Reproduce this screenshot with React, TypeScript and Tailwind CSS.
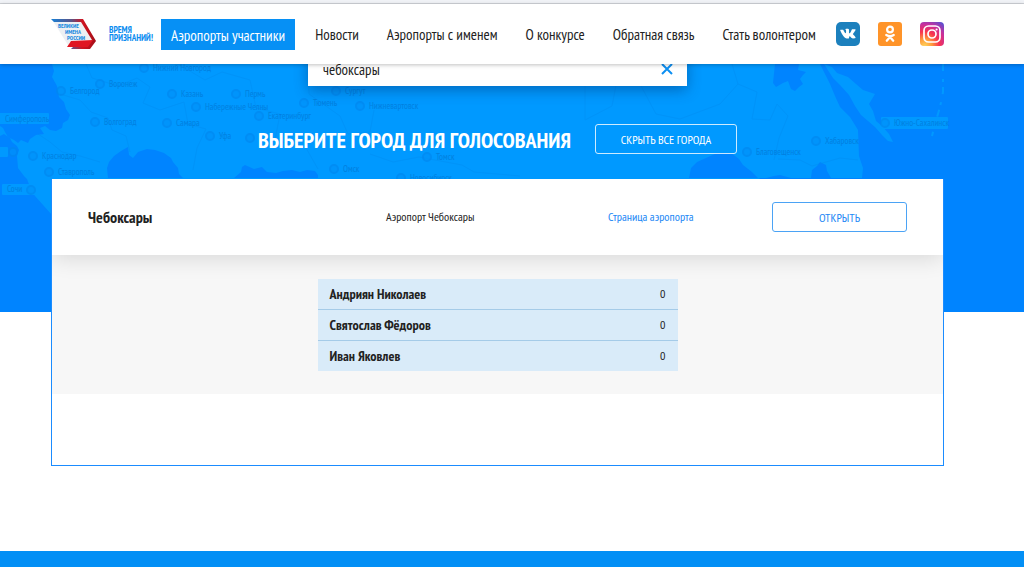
import { useState } from "react";

const navLinks = [
  "Новости",
  "Аэропорты с именем",
  "О конкурсе",
  "Обратная связь",
  "Стать волонтером",
];

const candidates = [
  { name: "Андриян Николаев", votes: 0 },
  { name: "Святослав Фёдоров", votes: 0 },
  { name: "Иван Яковлев", votes: 0 },
];

const cities = [
  { name: "Нижний Новгород", x: 144, y: 4 },
  { name: "Белгород", x: 61, y: 27 },
  { name: "Воронеж", x: 100, y: 20 },
  { name: "Казань", x: 172, y: 30 },
  { name: "Пермь", x: 236, y: 30 },
  { name: "Набережные Челны", x: 196, y: 43 },
  { name: "Волгоград", x: 95, y: 58 },
  { name: "Самара", x: 167, y: 59 },
  { name: "Уфа", x: 210, y: 72 },
  { name: "Краснодар", x: 33, y: 92 },
  { name: "Ставрополь", x: 49, y: 108 },
  { name: "Сургут", x: 336, y: 27 },
  { name: "Тюмень", x: 304, y: 39 },
  { name: "Нижневартовск", x: 360, y: 42 },
  { name: "Екатеринбург", x: 259, y: 52 },
  { name: "Томск", x: 427, y: 93 },
  { name: "Омск", x: 334, y: 105 },
  { name: "Новосибирск", x: 401, y: 114 },
  { name: "Благовещенск", x: 747, y: 88 },
  { name: "Хабаровск", x: 816, y: 77 },
];

function MapBackground() {
  return (
    <svg
      className="absolute top-0 left-0"
      width="1024"
      height="248"
      viewBox="0 0 1024 248"
      aria-hidden="true"
    >
      <path
        fill="#0099ff"
        d="M52 0 L54 7 52 13 57 22 59 33 64 38 66 45 70 51 68 56 63 59 62 64 56 67 50 66 45 62 40 64 44 70 36 71 30 75 28 79 21 76 18 79 14 76 8 73 5 68 3 64 0 62 0 72 4 70 10 74 12 78 17 82 19 86 17 92 18 104 24 112 27 115 30 123 35 132 60 160 420 200 700 180 760 114 870 114 862 114 863 104 859 92 858 66 850 53 840 43 835 32 830 20 826 12 820 0Z"
      />
      {/* Sakhalin and the Kurils */}
      <path
        fill="#0099ff"
        d="M824 0 L832 3 837 9 848 13 856 20 863 26 875 30 869 40 873 47 876 57 882 62 889 70 893 78 888 77 882 71 875 63 868 57 861 51 855 42 849 31 840 21 833 14Z"
      />
      <path
        stroke="#0099ff"
        strokeWidth="2"
        strokeDasharray="7 8 3 5"
        fill="none"
        d="M943 0 L943 28 Q940 45 936 56 L932 72"
      />
      {/* seas and the territory to the south */}
      <g fill="#0084ff">
        <path d="M775 0 L773 19 776 23 783 19 788 17 791 25 795 27 799 23 803 20 800 15 803 11 806 8 798 6 799 0Z" />
        <path d="M108 114 L107 104 109 98 114 92 121 87 128 83 129 91 133 94 138 88 147 85 155 86 164 89 171 94 173 98 178 104 179 110 183 114Z" />
        <path d="M234 114 L241 108 242 103 245 101 254 105 262 103 267 108 276 109 283 107 292 106 300 108 307 106 315 107 318 111 318 114Z" />
        <path d="M689 114 L691 104 697 98 706 94 717 89 731 89 739 95 743 101 752 108 758 114Z" />
        <path d="M811 114 L812 106 817 102 820 98 826 101 827 107 831 114Z" />
        <path d="M766 114 L774 112 780 111 791 114Z" />
      </g>
      {/* region borders */}
      <g fill="none" stroke="#008df2" strokeWidth="1" opacity="0.45">
        <path d="M60 30 L80 36 91 48 108 54 112 66 126 72 130 88" />
        <path d="M86 0 L92 14 118 22 137 14 150 23 143 39 160 46 184 38 188 60 206 65 197 84 193 106" />
        <path d="M38 70 L50 78 62 88 80 92 100 98" />
        <path d="M178 0 L205 16 222 8 250 16 256 44 280 50 275 76 306 84 318 105" />
        <path d="M308 0 L309 30 340 52 348 70 370 68 374 46" />
        <path d="M585 22 L585 56 612 42 620 0" />
        <path d="M640 20 L656 50 680 55 720 40 738 20 732 0" />
        <path d="M738 20 L757 28 752 55 770 56 777 40 788 52 779 74 774 96" />
        <path d="M370 90 L393 98 419 93 462 101 474 108 520 112" />
        <path d="M778 95 L800 96 812 102 840 94 858 96" />
      </g>
      <g fill="#0099ff">
        <rect x="-4" y="49" width="53" height="11" rx="1" />
        <rect x="-4" y="83" width="12" height="10" rx="1" />
        <rect x="2" y="120" width="34" height="11" rx="1" />
        <rect x="881" y="53" width="67" height="12" rx="1" />
      </g>
      <g fill="#0070cc" opacity="0.6" fontSize="9" fontFamily="'PT Sans Narrow', sans-serif">
        <text x="5" y="58">Симферополь</text>
        <text x="7" y="128">Сочи</text>
        <text x="894" y="62">Южно-Сахалинск</text>
        {cities.map((city) => (
          <text key={city.name} x={city.x + 9} y={city.y + 3}>
            {city.name}
          </text>
        ))}
      </g>
      <g fill="#0092fa" stroke="#0088f0" strokeWidth="2" opacity="0.7">
        {cities.map((city) => (
          <circle key={city.name} cx={city.x} cy={city.y} r="4" />
        ))}
        <circle cx="250" cy="74" r="4" />
        <circle cx="885" cy="59" r="4" />
        <circle cx="31" cy="126" r="4" />
        <circle cx="13" cy="88" r="4" />
      </g>
    </svg>
  );
}

function Logo() {
  return (
    <a href="#" className="flex items-center gap-3" aria-label="Великие имена России">
      <svg width="46" height="30" viewBox="0 0 46 30">
        <defs>
          <linearGradient id="edge" x1="0" x2="1" y1="0" y2="0">
            <stop offset="0" stopColor="#1680d8" />
            <stop offset="0.45" stopColor="#5b5487" />
            <stop offset="0.7" stopColor="#d01420" />
            <stop offset="1" stopColor="#a30e18" />
          </linearGradient>
        </defs>
        <path d="M2 2 L30 2 41 21 20 22 17 26Z" fill="#edf0f3" />
        <path
          d="M0 0 L32 0 45 22 39 30 20 30 22 28 37 25 41 21 30 3 3 3Z"
          fill="url(#edge)"
        />
        <path d="M20 22 L42 21 37 28 16 28Z" fill="#e01622" />
        <g fill="#1689e0" fontSize="6" fontWeight="700" fontFamily="'PT Sans Narrow', sans-serif">
          <text x="7" y="9">ВЕЛИКИЕ</text>
          <text x="14" y="15">ИМЕНА</text>
          <text x="16" y="21">РОССИИ</text>
        </g>
      </svg>
      <span className="text-[9px] leading-[8px] font-bold text-[#0a8cf0]">
        ВРЕМЯ
        <br />
        ПРИЗНАНИЙ!
      </span>
    </a>
  );
}

function SocialLinks() {
  return (
    <div className="flex items-center gap-[18px]">
      <a href="#" aria-label="ВКонтакте">
        <svg width="24" height="24" viewBox="0 0 24 24">
          <rect width="24" height="24" rx="5" fill="#1c80bd" />
          <path
            fill="#fff"
            d="M11.6 16.6h1.2s.4 0 .5-.3c.2-.2.2-.6.2-.6s0-1.6.7-1.9c.8-.2 1.7 1.6 2.8 2.3.7.5 1.3.4 1.3.4l2.6-.1s1.4-.1.7-1.2c0-.1-.4-.9-2-2.4-1.7-1.6-1.5-1.3.6-4 1.2-1.7 1.7-2.7 1.5-3.1-.1-.4-1-.3-1-.3h-3s-.2 0-.4.1c-.1.1-.3.4-.3.4s-.5 1.2-1.1 2.3c-1.3 2.3-1.9 2.4-2.1 2.2-.5-.3-.4-1.3-.4-2 0-2.2.3-3.1-.7-3.3-.3-.1-.5-.1-1.3-.1-1 0-1.9 0-2.4.2-.3.2-.6.5-.4.5.2 0 .6.1.8.4.3.4.3 1.3.3 1.3s.2 2.6-.4 2.9c-.4.2-1-.2-2.2-2.3C7 7.900 6.500 6.700 6.500 6.700s-.1-.3-.3-.4c-.2-.1-.5-.2-.5-.2H2.900s-.4 0-.6.2c-.1.2 0 .5 0 .5s2.200 5.200 4.700 7.800c2.300 2.400 4.600 2 4.600 2z"
            transform="translate(2.400 2.700) scale(.79 .83)"
          />
        </svg>
      </a>
      <a href="#" aria-label="Одноклассники">
        <svg width="24" height="24" viewBox="0 0 24 24">
          <rect width="24" height="24" rx="3" fill="#ff9429" />
          <g fill="none" stroke="#fff" strokeLinecap="round" strokeLinejoin="round">
            <circle cx="12" cy="7.5" r="2.9" strokeWidth="2.2" />
            <path
              d="M8.3 13 Q12 15.5 15.7 13 M12 15 L8.8 18.7 M12 15 L15.2 18.7"
              strokeWidth="2.3"
            />
          </g>
        </svg>
      </a>
      <a href="#" aria-label="Instagram">
        <svg width="24" height="24" viewBox="0 0 24 24">
          <defs>
            <radialGradient id="insta" cx="0.2" cy="1" r="1.2">
              <stop offset="0" stopColor="#ffd35a" />
              <stop offset="0.25" stopColor="#ff9a3c" />
              <stop offset="0.5" stopColor="#f8334f" />
              <stop offset="0.75" stopColor="#c92f9c" />
              <stop offset="1" stopColor="#5a4fd0" />
            </radialGradient>
          </defs>
          <rect width="24" height="24" rx="4" fill="url(#insta)" />
          <g fill="none" stroke="#fff" strokeWidth="1.7">
            <rect x="4" y="4" width="16" height="16" rx="4.5" />
            <circle cx="12" cy="12" r="4" />
          </g>
          <circle cx="16.6" cy="7.5" r="1.1" fill="#fff" />
        </svg>
      </a>
    </div>
  );
}

export default function App() {
  const [query, setQuery] = useState("чебоксары");

  return (
    <div className="min-h-screen bg-white font-['PT_Sans_Narrow',sans-serif] text-[#222]">
      <div className="h-1 border-b border-[#d0d3d8] bg-[#f1f3f7]" />
      <header className="relative z-10 bg-white shadow-[0_1px_4px_rgba(0,0,0,0.25)]">
        <div className="mr-20 ml-[51px] flex h-[60px] items-center justify-between">
          <div className="flex items-center gap-2">
            <Logo />
            <a href="#" className="bg-[#0690f5] px-2.5 pt-[5px] pb-[3px] text-[15px] leading-[23px] text-white">
              Аэропорты участники
            </a>
          </div>
          <nav className="flex gap-7 pt-0.5 text-[15px]">
            {navLinks.map((label) => (
              <a key={label} href="#">
                {label}
              </a>
            ))}
          </nav>
          <SocialLinks />
        </div>
      </header>

      <main className="relative flow-root">
        <div className="absolute inset-x-0 top-0 h-[248px] overflow-hidden bg-[#0084ff]">
          <MapBackground />
        </div>

        <div className="relative mr-20 ml-[51px]">
          <div className="mx-auto -mt-3 flex h-[34px] w-[379px] items-center bg-white pr-3 pl-[15px] shadow-[0_4px_14px_rgba(0,50,110,0.45)]">
            <input
              type="text"
              aria-label="Поиск города"
              value={query}
              onChange={(e) => setQuery(e.target.value)}
              className="min-w-0 flex-1 pt-0.5 text-[15px] outline-none"
            />
            <button type="button" aria-label="Очистить" onClick={() => setQuery("")}>
              <svg width="16" height="16" viewBox="0 0 16 16">
                <path d="M3 3 L13 13 M13 3 L3 13" stroke="#0d8ff2" strokeWidth="2" />
              </svg>
            </button>
          </div>

          <div className="flex items-center justify-center gap-6 pt-[38px] pb-[25px]">
            <h1 className="pt-0.5 text-[22px] leading-7 font-bold text-white uppercase">
              Выберите город для голосования
            </h1>
            <button
              type="button"
              className="h-[30px] w-[142px] rounded-[3px] border border-white/80 pt-0.5 text-[12px] text-white uppercase"
            >
              Скрыть все города
            </button>
          </div>

          <section className="overflow-hidden border-x border-b border-[#1b8cff] bg-white pb-[71px]">
            <div className="relative flex h-[76px] items-center px-9 shadow-[0_2px_22px_rgba(0,0,0,0.14)]">
              <h2 className="w-[298px] text-[16px] font-bold">Чебоксары</h2>
              <p className="w-[222px] text-[12px]">Аэропорт Чебоксары</p>
              <a href="#" className="text-[12px] text-[#1b87f5]">
                Страница аэропорта
              </a>
              <button
                type="button"
                className="ml-auto h-[30px] w-[135px] rounded-[3px] border border-[#4ba3f5] pt-0.5 text-[12px] text-[#1b87f5] uppercase"
              >
                Открыть
              </button>
            </div>
            <div className="bg-[#f7f7f7] pt-6 pb-[23px]">
              <ul className="mx-auto w-[360px] divide-y divide-[#a5cbe8] bg-[#d9ebf9]">
                {candidates.map((c) => (
                  <li
                    key={c.name}
                    className="flex items-center justify-between px-3 py-[5px] leading-5"
                  >
                    <span className="text-[14px] font-bold">{c.name}</span>
                    <span className="text-[12px]">{c.votes}</span>
                  </li>
                ))}
              </ul>
            </div>
          </section>
        </div>
      </main>

      <footer className="mt-[85px] h-4 bg-[#038ff5]" />
    </div>
  );
}
